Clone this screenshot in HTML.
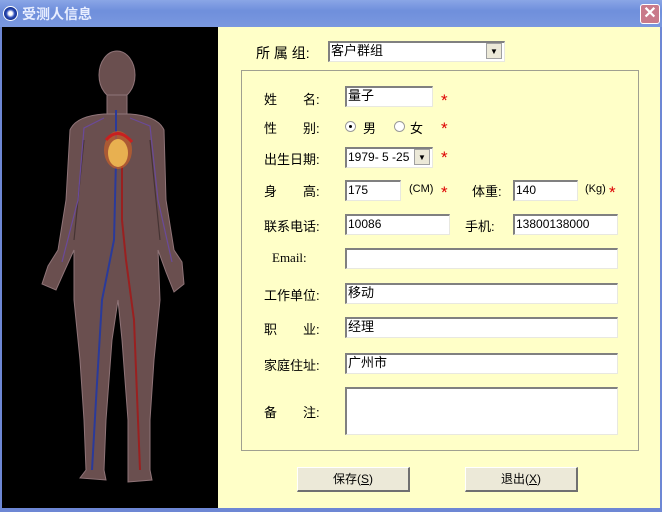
<!DOCTYPE html>
<html><head><meta charset="utf-8"><style>
*{margin:0;padding:0;box-sizing:border-box}
body{width:662px;height:512px;overflow:hidden;background:#FFFFC8;font-family:"Liberation Sans","Noto Sans CJK SC","WenQuanYi Zen Hei",sans-serif;font-size:13px;color:#000;position:relative}
.a{position:absolute}
.tb{left:0;top:0;width:662px;height:27px;background:linear-gradient(#8aa6e6,#6f8fdc 40%,#7a98df);}
.title{left:22px;top:4px;color:#e8eeff;font-size:14px;font-weight:bold}
.ic{left:3px;top:6px;width:15px;height:15px;border-radius:50%;background:radial-gradient(circle,#fff 20%,#2a4ab8 45%,#14318a 70%);border:1px solid #fff}
.close{left:640px;top:4px;width:20px;height:20px;background:#c97a8a;border:1px solid #fff;border-radius:3px;color:#fff;font-size:16px;line-height:17px;text-align:center;font-weight:bold}
.left{left:0;top:27px;width:218px;height:481px;background:#000;border-left:2px solid #6d87d4}
.bot{left:0;top:508px;width:662px;height:4px;background:#6d87d4}
.rb{left:660px;top:27px;width:2px;height:481px;background:#6d87d4}
.inp{position:absolute;background:#fff;border-top:2px solid #808080;border-left:2px solid #808080;border-right:1px solid #e8e8e0;border-bottom:1px solid #e8e8e0;padding-left:1px;line-height:16px;font-size:13px}
.lb{position:absolute;font-size:13px}
.st{position:absolute;color:#d00;font-size:17px;line-height:17px}
.grp{left:241px;top:70px;width:398px;height:381px;border:1px solid #a0a090}
.btn{position:absolute;width:113px;height:25px;background:#ece9d8;border-top:1px solid #fff;border-left:1px solid #fff;border-right:2px solid #707070;border-bottom:2px solid #707070;text-align:center;line-height:22px;font-size:12px}
.dd{position:absolute;width:16px;height:16px;background:#ece9d8;border:1px solid #a0a0a0;font-size:8px;text-align:center;line-height:15px}
</style></head><body>
<div class="a tb"></div>
<div class="a ic"></div>
<div class="a title">受测人信息</div>
<div class="a close">✕</div>
<div class="a left">
<svg width="216" height="481" viewBox="2 27 216 481">
<g fill="#6a4f4f" stroke="#8f7478" stroke-width="1">
<ellipse cx="117" cy="75" rx="18" ry="24"/>
<rect x="107" y="95" width="20" height="24"/>
<path d="M70 130 Q76 116 104 114 L130 114 Q158 116 164 130 L166 200 L174 250 L182 262 L184 284 L174 292 L166 272 L158 250 L160 300 L154 360 L150 420 L150 470 L152 480 L128 482 L128 420 L122 340 L118 300 L112 340 L106 420 L104 470 L106 480 L80 478 L86 470 L84 420 L80 360 L74 300 L74 250 L64 272 L56 290 L42 284 L48 266 L58 250 L66 200 Z"/>
</g>
<path d="M84 140 L74 240 M150 140 L160 240" stroke="#000" stroke-width="1.2" opacity=".35" fill="none"/>
<path d="M116 110 L116 160 L114 240 L102 300 L96 400 L92 470" stroke="#2a3a9a" stroke-width="2" fill="none"/>
<path d="M122 140 L122 220 L126 260 L134 320 L138 420 L140 470" stroke="#9a2020" stroke-width="2" fill="none"/>
<path d="M104 118 L84 128 L78 200 L62 262 M130 118 L150 126 L158 200 L172 262" stroke="#6a4a9a" stroke-width="1.2" fill="none"/>
<ellipse cx="118" cy="150" rx="14" ry="19" fill="#c8602a" opacity=".7"/>
<ellipse cx="118" cy="153" rx="10" ry="14" fill="#e8b050"/>
<path d="M106 140 Q118 126 132 142" stroke="#c82020" stroke-width="3" fill="none"/>
</svg>
</div>
<div class="a rb"></div>
<div class="a bot"></div>

<div class="lb" style="left:256px;top:43px;font-size:14px">所 属 组:</div>
<div class="inp" style="left:328px;top:41px;width:177px;height:21px;font-size:13px">客户群组</div>
<div class="dd" style="left:486px;top:43px">▼</div>

<div class="a grp"></div>

<div class="lb" style="left:264px;top:89px">姓　　名:</div>
<div class="inp" style="left:345px;top:86px;width:88px;height:21px">量子</div>
<div class="st" style="left:441px;top:92px">*</div>

<div class="lb" style="left:264px;top:118px">性　　别:</div>
<div class="a" style="left:345px;top:121px;width:11px;height:11px;border-radius:50%;background:#fff;border:1px solid #999"><div style="margin:3px;width:3px;height:3px;background:#000;border-radius:50%"></div></div>
<div class="lb" style="left:363px;top:118px">男</div>
<div class="a" style="left:394px;top:121px;width:11px;height:11px;border-radius:50%;background:#fff;border:1px solid #999"></div>
<div class="lb" style="left:410px;top:118px">女</div>
<div class="st" style="left:441px;top:120px">*</div>

<div class="lb" style="left:264px;top:149px">出生日期:</div>
<div class="inp" style="left:345px;top:147px;width:88px;height:21px;font-size:12px">1979- 5 -25</div>
<div class="dd" style="left:414px;top:149px">▼</div>
<div class="st" style="left:441px;top:149px">*</div>

<div class="lb" style="left:264px;top:181px">身　　高:</div>
<div class="inp" style="left:345px;top:180px;width:56px;height:21px;font-size:12px">175</div>
<div class="lb" style="left:409px;top:183px;font-size:11px">(CM)</div>
<div class="st" style="left:441px;top:184px">*</div>
<div class="lb" style="left:472px;top:181px">体重:</div>
<div class="inp" style="left:513px;top:180px;width:65px;height:21px;font-size:12px">140</div>
<div class="lb" style="left:585px;top:183px;font-size:11px">(Kg)</div>
<div class="st" style="left:609px;top:184px">*</div>

<div class="lb" style="left:264px;top:216px">联系电话:</div>
<div class="inp" style="left:345px;top:214px;width:105px;height:21px;font-size:12px">10086</div>
<div class="lb" style="left:465px;top:216px">手机:</div>
<div class="inp" style="left:513px;top:214px;width:105px;height:21px;font-size:12px">13800138000</div>

<div class="lb" style="left:272px;top:250px;font-family:'Liberation Serif',serif">Email:</div>
<div class="inp" style="left:345px;top:248px;width:273px;height:21px"></div>

<div class="lb" style="left:264px;top:285px">工作单位:</div>
<div class="inp" style="left:345px;top:283px;width:273px;height:21px">移动</div>

<div class="lb" style="left:264px;top:319px">职　　业:</div>
<div class="inp" style="left:345px;top:317px;width:273px;height:21px">经理</div>

<div class="lb" style="left:264px;top:355px">家庭住址:</div>
<div class="inp" style="left:345px;top:353px;width:273px;height:21px">广州市</div>

<div class="lb" style="left:264px;top:402px">备　　注:</div>
<div class="inp" style="left:345px;top:387px;width:273px;height:48px"></div>

<div class="btn" style="left:297px;top:467px">保存(<u>S</u>)</div>
<div class="btn" style="left:465px;top:467px">退出(<u>X</u>)</div>
</body></html>
